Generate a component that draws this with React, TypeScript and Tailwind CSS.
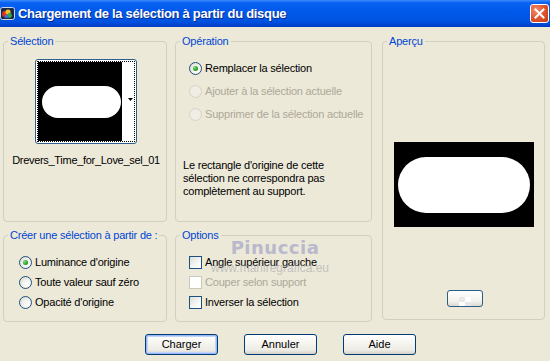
const font = "font-['Liberation_Sans',Arial,sans-serif]";

const Group = ({ title, className, children }: { title: string; className?: string; children?: React.ReactNode }) => (
  <fieldset className={`border border-[#d0d0bf] rounded-[4px] min-w-0 ${className ?? ""}`}>
    <legend className="ml-[4px] px-[2px] text-[11px] leading-[12px] tracking-[-0.2px] whitespace-nowrap text-[#0046d5]">{title}</legend>
    {children}
  </fieldset>
);

const Radio = ({ label, checked, disabled }: { label: string; checked?: boolean; disabled?: boolean }) => (
  <div className="flex items-center">
    <span
      className={`w-[13px] h-[13px] shrink-0 rounded-full border flex items-center justify-center ${
        disabled
          ? "border-[#d5d3c6] bg-[#f0eee4]"
          : "border-[#1c5180] bg-[radial-gradient(circle_at_65%_65%,#ffffff_0%,#f2f1ea_45%,#d6d4c8_100%)]"
      }`}
    >
      {checked && <span className="w-[5px] h-[5px] rounded-full bg-[radial-gradient(circle_at_35%_35%,#7be07b_0%,#21a121_60%,#138013_100%)]" />}
    </span>
    <span className={`ml-[3px] text-[11px] tracking-[-0.2px] whitespace-nowrap ${disabled ? "text-[#aca899]" : "text-black"}`}>{label}</span>
  </div>
);

const Check = ({ label, disabled }: { label: string; disabled?: boolean }) => (
  <div className="h-[20px] flex items-center">
    <span
      className={`w-[13px] h-[13px] shrink-0 border ${
        disabled ? "border-[#cac8bb] bg-white" : "border-[#1c5180] bg-[linear-gradient(135deg,#dcdcd7_0%,#f7f7f5_60%,#ffffff_100%)]"
      }`}
    />
    <span className={`ml-[3px] text-[11px] tracking-[-0.2px] whitespace-nowrap ${disabled ? "text-[#aca899]" : "text-black"}`}>{label}</span>
  </div>
);

const Button = ({ label, isDefault }: { label: string; isDefault?: boolean }) => (
  <button
    className={`w-[73px] h-[21px] rounded-[3px] border border-[#003c74] text-[11px] text-black bg-[linear-gradient(180deg,#ffffff_0%,#f6f5f0_40%,#ecebe6_80%,#d6d0c5_100%)] ${
      isDefault ? "shadow-[inset_0_0_0_1px_#98b8f6,inset_0_0_0_2px_#c1d3fb]" : ""
    }`}
  >
    {label}
  </button>
);

export default function App() {
  return (
    <div className={`w-[550px] h-[361px] bg-[#ece9d8] overflow-hidden relative ${font}`}>
      {/* title bar */}
      <div className="h-[27px] flex items-center bg-[linear-gradient(180deg,#3d8cfa_0%,#0a62f2_10%,#0058ea_45%,#0054e3_75%,#0048d4_92%,#003cc0_100%)]">
        <svg width="15" height="15" viewBox="0 0 15 15">
          <rect x="0.5" y="1.5" width="14" height="12" rx="2" fill="#1b2a4a" stroke="#cfd8e8" />
          <circle cx="5" cy="8" r="3" fill="#d8322a" />
          <circle cx="8" cy="6" r="2.6" fill="#f0c020" />
          <circle cx="9.5" cy="9.5" r="2.4" fill="#2fa84f" />
          <circle cx="6.5" cy="10.5" r="1.8" fill="#3a6fe0" />
        </svg>
        <span className="ml-[3px] text-[13px] font-bold text-white tracking-[-0.3px] [text-shadow:1px_1px_0_#0a2a8a]">
          Chargement de la sélection à partir du disque
        </span>
        <div className="ml-auto mr-[1px] w-[19px] h-[19px] rounded-[3px] border border-white bg-[radial-gradient(circle_at_30%_30%,#f08a6a_0%,#e0502b_55%,#c23a18_100%)] flex items-center justify-center">
          <svg width="11" height="11" viewBox="0 0 11 11">
            <path d="M1.5 1.5 L9.5 9.5 M9.5 1.5 L1.5 9.5" stroke="white" strokeWidth="2" strokeLinecap="square" />
          </svg>
        </div>
      </div>

      <div className="pt-[8px] pl-[3px] grid grid-cols-[164px_197px_165px] grid-rows-[187px_93px] gap-x-[8px] gap-y-[7px]">
        <Group title="Sélection">
          <div className="flex flex-col items-center">
            <div className="mt-[12px] ml-[2px] w-[102px] h-[85px] rounded-[3px] border border-[#2b5c8a] bg-white p-[1px]">
              <div className="w-full h-full border border-dotted border-black flex">
                <div className="w-[84px] bg-black flex items-center">
                  <div className="ml-[4px] w-[79px] h-[32px] rounded-full bg-white" />
                </div>
                <div className="flex-1 flex justify-end pt-[36px] pr-[1px]">
                  <svg width="5" height="3" viewBox="0 0 5 3">
                    <path d="M0 0 H5 L2.5 3 Z" fill="black" />
                  </svg>
                </div>
              </div>
            </div>
            <div className="mt-[9px] ml-[2px] text-[11px] leading-[14px] tracking-[-0.3px] text-black">Drevers_Time_for_Love_sel_01</div>
          </div>
        </Group>

        <Group title="Opération">
          <div className="pt-[10px] pl-[13px] [&>div]:h-[23px]">
            <Radio label="Remplacer la sélection" checked />
            <Radio label="Ajouter à la sélection actuelle" disabled />
            <Radio label="Supprimer de la sélection actuelle" disabled />
          </div>
          <p className="mt-[33px] pl-[7px] text-[11px] leading-[13px] tracking-[-0.2px] text-black">
            Le rectangle d'origine de cette
            <br />
            sélection ne correspondra pas
            <br />
            complètement au support.
          </p>
        </Group>

        <Group title="Aperçu" className="row-span-2 self-start h-[285px] ml-[2px]">
          <div className="flex flex-col items-center">
            <div className="mt-[95px] ml-[1px] w-[140px] h-[85px] bg-black flex items-center justify-center">
              <div className="w-[132px] h-[56px] rounded-full bg-white" />
            </div>
            <div className="mt-[63px] ml-[2px] w-[36px] h-[17px] rounded-[3px] border border-[#2b5c8a] bg-[linear-gradient(180deg,#ffffff_0%,#f1f0ec_70%,#dcd8cf_100%)] flex items-end justify-center">
              <div className="w-[12px] h-[9px] grid grid-cols-2 grid-rows-2">
                <span className="bg-[#e8e8e8]" />
                <span className="bg-white" />
                <span className="bg-white" />
                <span className="bg-[#e8e8e8]" />
              </div>
            </div>
          </div>
        </Group>

        <Group title="Créer une sélection à partir de :">
          <div className="pt-[11px] pl-[15px] [&>div]:h-[20px]">
            <Radio label="Luminance d'origine" checked />
            <Radio label="Toute valeur sauf zéro" />
            <Radio label="Opacité d'origine" />
          </div>
        </Group>

        <Group title="Options">
          <div className="pt-[11px] pl-[13px]">
            <Check label="Angle supérieur gauche" />
            <Check label="Couper selon support" disabled />
            <Check label="Inverser la sélection" />
          </div>
        </Group>
      </div>

      <div className="mt-[12px] ml-[145px] flex gap-[26px]">
        <Button label="Charger" isDefault />
        <Button label="Annuler" />
        <Button label="Aide" />
      </div>

      {/* watermark */}
      <div className="absolute left-[209px] top-[238px] w-[122px] flex flex-col items-center pointer-events-none">
        <span className="ml-[10px] text-[18px] leading-[20px] font-bold tracking-[0.5px] text-[#a4a4c8] opacity-70 font-['DejaVu_Sans',sans-serif]">Pinuccia</span>
        <span className="mt-[4px] text-[12px] leading-[12px] text-[#9a9aa8] opacity-50">www.marilregrafica.eu</span>
      </div>
    </div>
  );
}
